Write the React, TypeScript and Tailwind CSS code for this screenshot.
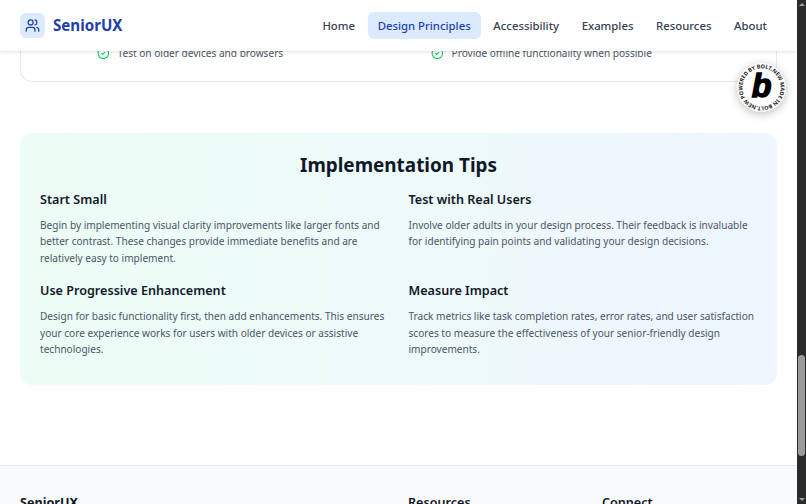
import { CircleCheck, Users } from "lucide-react";

const navItems = ["Home", "Design Principles", "Accessibility", "Examples", "Resources", "About"];

const tips = [
  {
    title: "Start Small",
    body: "Begin by implementing visual clarity improvements like larger fonts and better contrast. These changes provide immediate benefits and are relatively easy to implement.",
  },
  {
    title: "Test with Real Users",
    body: "Involve older adults in your design process. Their feedback is invaluable for identifying pain points and validating your design decisions.",
  },
  {
    title: "Use Progressive Enhancement",
    body: "Design for basic functionality first, then add enhancements. This ensures your core experience works for users with older devices or assistive technologies.",
  },
  {
    title: "Measure Impact",
    body: "Track metrics like task completion rates, error rates, and user satisfaction scores to measure the effectiveness of your senior-friendly design improvements.",
  },
];

function BoltBadge() {
  return (
    <div className="absolute left-[737px] top-[63px] z-30 h-[49px] w-[49px] rounded-full bg-white shadow-[0_2px_8px_rgba(0,0,0,0.25)]">
      <svg viewBox="0 0 50 50" className="h-full w-full">
        <defs>
          <path id="badge-ring" d="M25 25 m-19.5 0 a19.5 19.5 0 1 1 39 0 a19.5 19.5 0 1 1 -39 0" />
        </defs>
        <g transform="rotate(-32 25 25)">
          <text className="fill-[#222222] text-[5.6px] font-bold" textLength="120">
            <textPath href="#badge-ring">POWERED BY BOLT.NEW MADE IN BOLT.NEW</textPath>
          </text>
        </g>
        <text x="25" y="35" textAnchor="middle" className="fill-black text-[33px] font-bold italic [font-family:'Liberation_Sans',sans-serif]" stroke="black" strokeWidth="1.4">
          b
        </text>
      </svg>
    </div>
  );
}

export default function App() {
  return (
    <div className="relative flex h-[504px] w-[806px] overflow-hidden bg-white font-['Noto_Sans',sans-serif]">
      <div className="flex w-[797px] flex-col">
        <header className="relative z-20 flex h-[51px] shrink-0 items-center justify-between bg-white px-5 shadow-[0_1px_3px_rgba(0,0,0,0.12)]">
          <div className="flex items-center gap-2">
            <div className="flex h-[25px] w-[25px] items-center justify-center rounded-md bg-blue-100">
              <Users className="h-[15px] w-[15px] text-[#1e40af]" />
            </div>
            <span className="text-[15.12px] font-bold text-[#1e40af]">SeniorUX</span>
          </div>
          <nav className="flex items-center gap-[2.52px]">
            {navItems.map((item) => (
              <a
                key={item}
                className={
                  item === "Design Principles"
                    ? "rounded-md bg-blue-100 px-[10.08px] py-[5px] text-[11.34px] leading-[17.6px] font-medium text-[#1e40af]"
                    : "rounded-md px-[10.08px] py-[5px] text-[11.34px] leading-[17.6px] font-medium text-gray-700"
                }
              >
                {item}
              </a>
            ))}
          </nav>
        </header>

        <main className="flex flex-1 flex-col px-5">
          <section className="-mt-4 h-[47px] shrink-0 rounded-b-xl border border-t-0 border-gray-200">
            <div className="grid grid-cols-[334px_1fr] pt-[10px] pl-[76px] text-[10.08px] leading-[16px] text-gray-600">
              <div className="flex items-center gap-2">
                <CircleCheck className="h-[12.6px] w-[12.6px] text-green-500" />
                <span>Test on older devices and browsers</span>
              </div>
              <div className="flex items-center gap-2">
                <CircleCheck className="h-[12.6px] w-[12.6px] text-green-500" />
                <span>Provide offline functionality when possible</span>
              </div>
            </div>
          </section>

          <section className="mt-[51px] h-[252px] shrink-0 rounded-xl bg-gradient-to-r from-[#ecfdf5] to-blue-50 px-5 pt-[18px]">
            <h2 className="text-center text-[18.9px] leading-[28px] font-bold text-gray-900">Implementation Tips</h2>
            <div className="mt-[11px] grid grid-cols-2 gap-x-5 gap-y-[15px]">
              {tips.map((tip) => (
                <div key={tip.title}>
                  <h3 className="text-[12.6px] leading-[20px] font-semibold text-gray-900">{tip.title}</h3>
                  <p className="mt-[7px] text-[10.08px] leading-[16.38px] text-gray-600">{tip.body}</p>
                </div>
              ))}
            </div>
          </section>
        </main>

        <footer className="h-[39px] shrink-0 border-t border-gray-200 bg-gray-50 px-5 pt-[27px]">
          <div className="grid grid-cols-[388px_194px_1fr] text-[12.6px] leading-[20px] font-semibold text-gray-900">
            <span className="font-bold">SeniorUX</span>
            <span>Resources</span>
            <span>Connect</span>
          </div>
        </footer>
      </div>

      <div className="flex w-[9px] shrink-0 flex-col items-center justify-between bg-[#2b2b2b] py-[3px]">
        <div className="h-0 w-0 border-x-[3px] border-b-[3px] border-x-transparent border-b-gray-400" />
        <div className="h-0 w-0 border-x-[3px] border-t-[3px] border-x-transparent border-t-gray-400" />
      </div>
      <div className="absolute left-[798px] top-[355px] h-[101px] w-[7px] rounded-sm bg-[#9b9b9b]" />

      <BoltBadge />
    </div>
  );
}
